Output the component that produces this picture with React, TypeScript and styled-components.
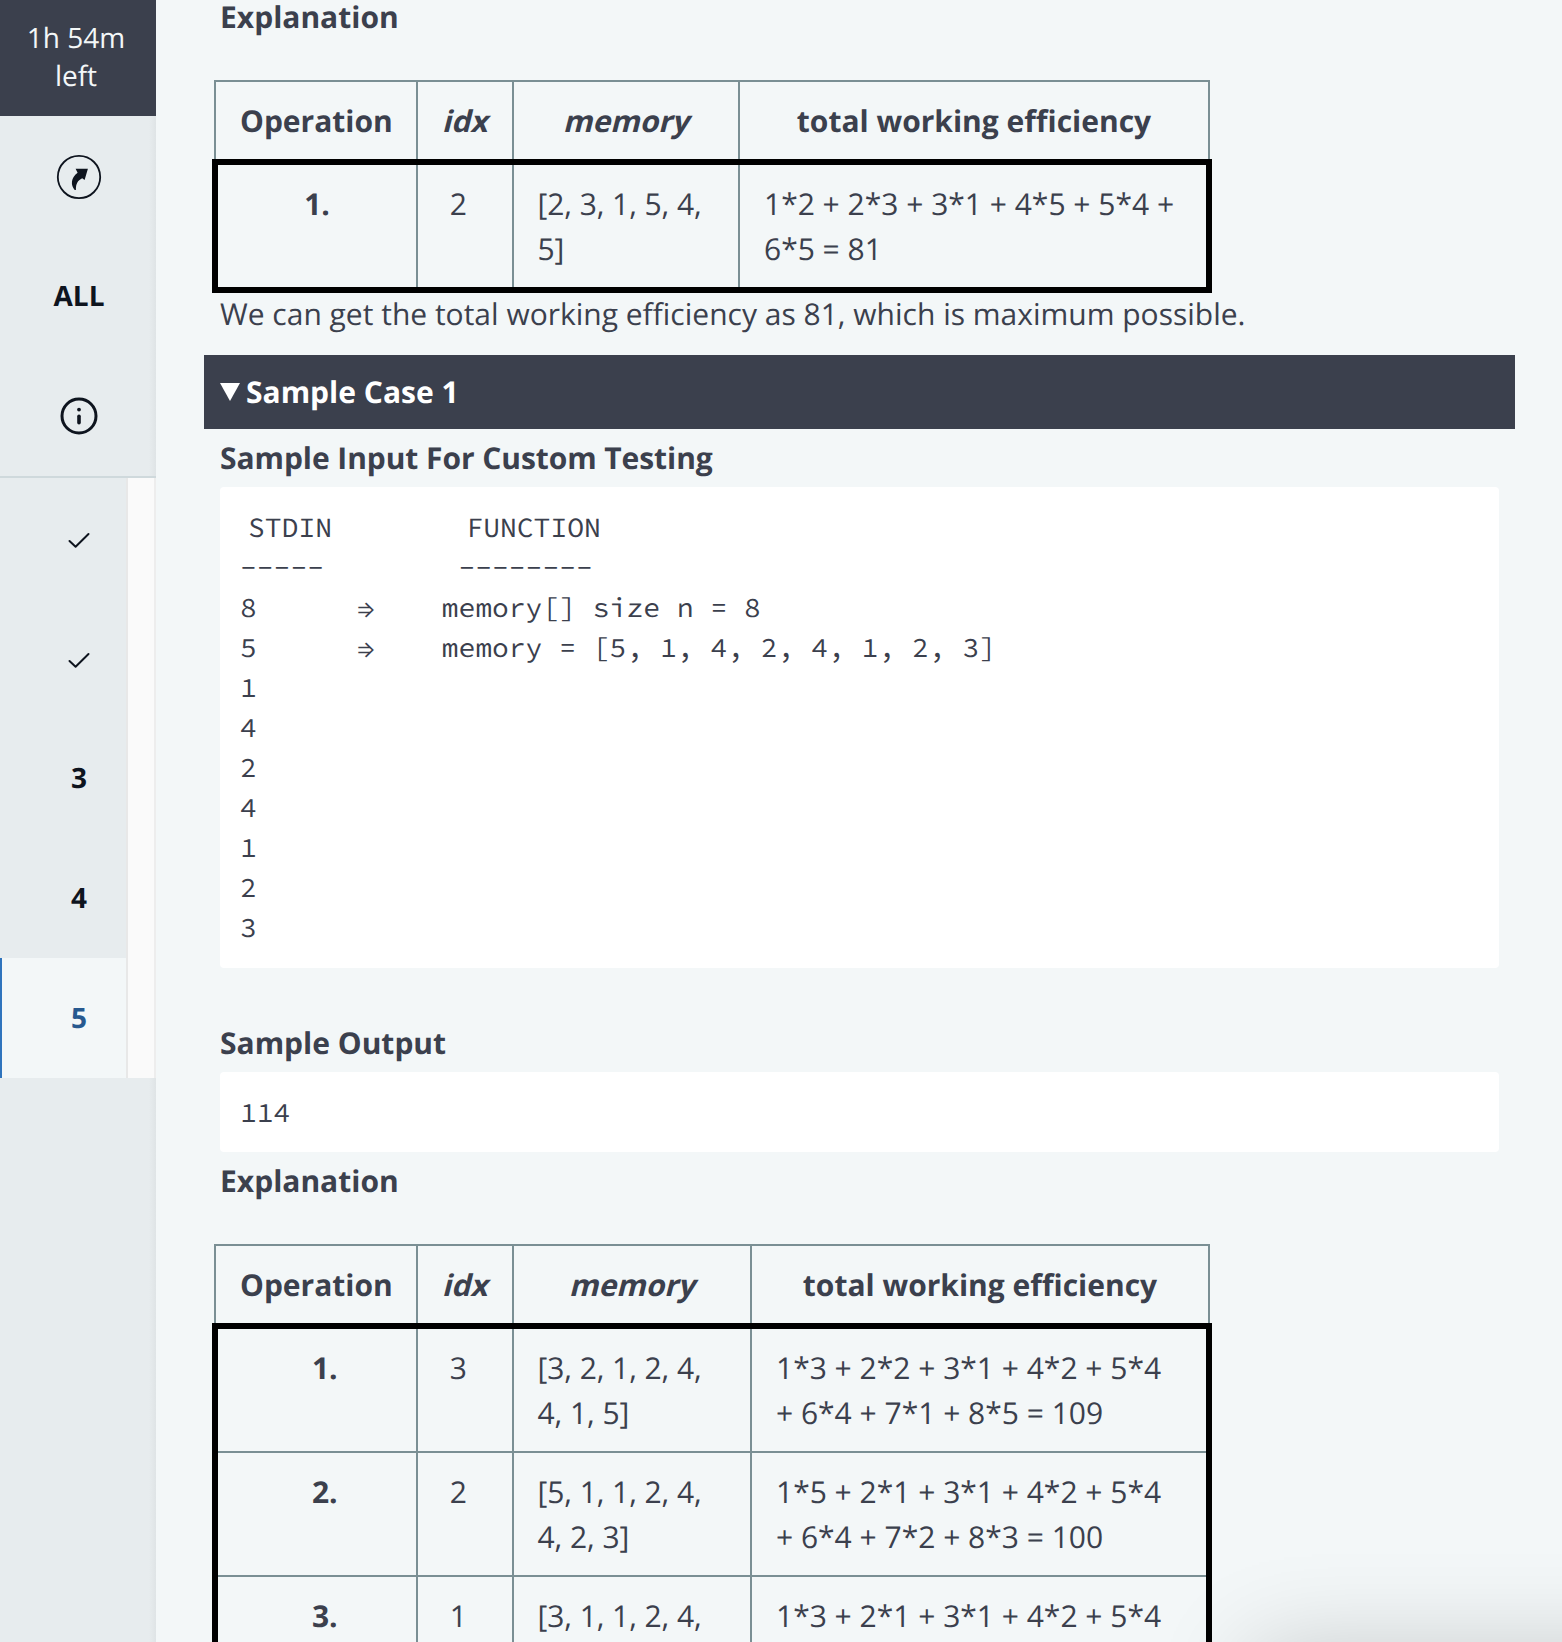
import React from "react";
import styled, { createGlobalStyle } from "styled-components";

const GlobalStyle = createGlobalStyle`
  *, *::before, *::after { box-sizing: border-box; }
  html, body { margin: 0; padding: 0; height: 1642px; overflow: hidden; }
  body { background: #f3f7f8; font-family: "Open Sans", sans-serif; text-rendering: geometricPrecision; }
`;

const Page = styled.div`
  position: relative;
  display: flex;
  width: 1562px;
  height: 1642px;
  overflow: hidden;
  background: #f3f7f8;
  color: #3b404d;
  font-size: 30px;
  line-height: 45px;
`;

const Sidebar = styled.aside`
  display: flex;
  flex-direction: column;
  flex: none;
  width: 156px;
  color: #0e141e;
  font-size: 28px;
  line-height: 38px;
  background: linear-gradient(to left, #dfe4e6 0, #e7ecee 7px, #e7ecee 100%);
`;

const Timer = styled.div`
  height: 116px;
  padding: 19px 4px 0 0;
  background: #3b404d;
  color: #f3f7f8;
  text-align: center;
`;

const TopItems = styled.div`
  display: flex;
  flex-direction: column;
  height: 362px;
  border-bottom: 2px solid #cfd9dc;
`;

const NavItem = styled.div<{ $active?: boolean }>`
  display: flex;
  align-items: center;
  justify-content: center;
  flex: none;
  height: 120px;
  padding-left: 2px;
  font-weight: 700;
`;

const QuestionArea = styled.div`
  display: flex;
  height: 600px;
`;

const Questions = styled.div`
  width: 126px;
  background: #e7ecee;
`;

const Question = styled(NavItem)`
  padding-left: ${(p) => (p.$active ? 30 : 32)}px;
  border-left: ${(p) => (p.$active ? "2px solid #2f74bd" : "none")};
  background: ${(p) => (p.$active ? "#f3f7f8" : "transparent")};
  color: ${(p) => (p.$active ? "#27598f" : "inherit")};
`;

const ScrollTrack = styled.div`
  width: 30px;
  background: #fafafa;
  border-left: 2px solid #e8e8e8;
  border-right: 2px solid #ededed;
`;

const Main = styled.main`
  flex: none;
  width: 1406px;
  padding: 0 47px 0 48px;
`;

const Heading = styled.h4<{ $top?: number; $bottom?: number; $tracking?: number }>`
  margin: ${(p) => p.$top ?? 0}px 0 ${(p) => p.$bottom ?? 0}px 16px;
  height: 45px;
  font-size: 30px;
  font-weight: 700;
  letter-spacing: ${(p) => p.$tracking ?? 0}px;
`;

const Paragraph = styled.p`
  margin: -2px 0 19px 16px;
  height: 45px;
`;

const CaseBar = styled.div`
  display: flex;
  align-items: center;
  gap: 6px;
  height: 74px;
  padding: 0 16px 2px;
  background: #3b404d;
  color: #fff;
  font-weight: 700;
`;

const Marker = styled.svg`
  margin-top: 2px;
`;

const Pre = styled.pre<{ $bottom?: number }>`
  margin: 0 16px;
  padding: 20px 20px ${(p) => p.$bottom ?? 20}px;
  background: #fff;
  border-radius: 4px;
  font-family: "Source Code Pro", "Noto Sans Mono CJK SC", "Liberation Mono", monospace;
  font-size: 28px;
  line-height: 40px;
`;

const Line = styled.span<{ $indent?: boolean }>`
  display: block;
  height: 40px;
  padding-left: ${(p) => (p.$indent ? 8 : 0)}px;
`;

const Table = styled.table`
  width: 1000px;
  margin-left: 8px;
  table-layout: fixed;
  border-collapse: collapse;
`;

const Row = styled.tr``;

const Body = styled.tbody`
  border: 6px solid #000;
`;

const Cell = styled.td<{ $center?: boolean; $bold?: boolean }>`
  padding: 16px 0 16px 24px;
  padding-right: ${(p) => (p.$center ? 24 : 0)}px;
  border: 2px solid #7a8f94;
  text-align: ${(p) => (p.$center ? "center" : "left")};
  font-weight: ${(p) => (p.$bold ? 700 : 400)};
  vertical-align: top;
  white-space: pre;
`;

const MemoryCell = styled(Cell)`
  padding-left: 23.5px;
  letter-spacing: -0.09px;
`;

const Slanted = styled.em`
  display: inline-block;
  font-style: normal;
  transform: skewX(-14deg);
  transform-origin: 50% 33px;
`;

const CornerShadow = styled.div`
  position: absolute;
  left: 1252px;
  top: 1650px;
  width: 600px;
  height: 300px;
  box-shadow: 0 0 92px rgba(0, 0, 0, 0.19);
  pointer-events: none;
`;

type Entry = { op: string; idx: string; memory: string; total: string };

function OperationsTable({ memoryWidth, rows }: { memoryWidth: number; rows: Entry[] }) {
  return (
    <Table>
      <colgroup>
        <col width={202} />
        <col width={96} />
        <col width={memoryWidth} />
        <col />
      </colgroup>
      <thead>
        <Row>
          <Cell as="th" $center $bold>Operation</Cell>
          <Cell as="th" $center $bold><Slanted>idx</Slanted></Cell>
          <Cell as="th" $center $bold><Slanted>memory</Slanted></Cell>
          <Cell as="th" $center $bold>total working efficiency</Cell>
        </Row>
      </thead>
      <Body>
        {rows.map((r) => (
          <Row key={r.op}>
            <Cell $center $bold>{r.op}</Cell>
            <Cell>{"\u00a0" + r.idx}</Cell>
            <MemoryCell>{r.memory}</MemoryCell>
            <Cell>{r.total}</Cell>
          </Row>
        ))}
      </Body>
    </Table>
  );
}

const CheckIcon = () => (
  <svg width="24" height="24" viewBox="0 0 24 24" fill="none" stroke="#0e141e" strokeWidth="2" strokeLinecap="round" strokeLinejoin="round">
    <path d="M2.5 15 L8.6 20.7 L21.5 8" />
  </svg>
);

const ShareIcon = () => (
  <svg width="46" height="48" viewBox="0 0 46 48">
    <circle cx="23" cy="25" r="21.2" fill="none" stroke="#0e141e" strokeWidth="1.8" />
    <path fill="#0e141e" d="M19.6 16.8 H31.9 L28.6 27.9 L26.2 26.3 C21.5 28.5 19.8 32 19.9 37.9 H18.7 C14.6 33.5 14.6 26 21.6 20.8 Z" />
  </svg>
);

const InfoIcon = () => (
  <svg width="38" height="38" viewBox="0 0 38 38" fill="none" stroke="#0e141e" strokeLinecap="round">
    <circle cx="19" cy="19" r="17" strokeWidth="3" />
    <path d="M19 19.3 V25.7" strokeWidth="3.6" />
    <circle cx="19" cy="12.6" r="1.9" fill="#0e141e" stroke="none" />
  </svg>
);

export default function App() {
  return (
    <Page>
      <GlobalStyle />
      <Sidebar>
        <Timer>1h 54m<br />left</Timer>
        <TopItems>
          <NavItem><ShareIcon /></NavItem>
          <NavItem>ALL</NavItem>
          <NavItem><InfoIcon /></NavItem>
        </TopItems>
        <QuestionArea>
          <Questions>
            <Question><CheckIcon /></Question>
            <Question><CheckIcon /></Question>
            <Question>3</Question>
            <Question>4</Question>
            <Question $active>5</Question>
          </Questions>
          <ScrollTrack />
        </QuestionArea>
      </Sidebar>
      <Main>
        <Heading $top={-6} $bottom={41}>Explanation</Heading>
        <OperationsTable
          memoryWidth={226}
          rows={[{ op: "1.", idx: "2", memory: "[2, 3, 1, 5, 4,\n5]", total: "1*2 + 2*3 + 3*1 + 4*5 + 5*4 +\n6*5 = 81" }]}
        />
        <Paragraph>We can get the total working efficiency as 81, which is maximum possible.</Paragraph>
        <CaseBar>
          <Marker width="20" height="18" viewBox="0 0 20 18"><path d="M0 0 H20 L10 18 Z" fill="#fff" /></Marker>
          Sample Case 1
        </CaseBar>
        <Heading $top={6} $bottom={7} $tracking={-0.07}>Sample Input For Custom Testing</Heading>
        <Pre $bottom={21}>
          <Line $indent>{"STDIN        FUNCTION"}</Line>
          <Line>{"-----        --------"}</Line>
          <Line>{"8      ⇒    memory[] size n = 8"}</Line>
          <Line>{"5      ⇒    memory = [5, 1, 4, 2, 4, 1, 2, 3]"}</Line>
          {["1", "4", "2", "4", "1", "2", "3"].map((n, i) => <Line key={i}>{n}</Line>)}
        </Pre>
        <Heading $top={52} $bottom={7}>Sample Output</Heading>
        <Pre><Line>114</Line></Pre>
        <Heading $top={6} $bottom={41}>Explanation</Heading>
        <OperationsTable
          memoryWidth={238}
          rows={[
            { op: "\u00a0\u00a01.", idx: "3", memory: "[3, 2, 1, 2, 4,\n4, 1, 5]", total: "1*3 + 2*2 + 3*1 + 4*2 + 5*4\n+ 6*4 + 7*1 + 8*5 = 109" },
            { op: "\u00a0\u00a02.", idx: "2", memory: "[5, 1, 1, 2, 4,\n4, 2, 3]", total: "1*5 + 2*1 + 3*1 + 4*2 + 5*4\n+ 6*4 + 7*2 + 8*3 = 100" },
            { op: "\u00a0\u00a03.", idx: "1", memory: "[3, 1, 1, 2, 4,", total: "1*3 + 2*1 + 3*1 + 4*2 + 5*4" },
          ]}
        />
      </Main>
      <CornerShadow />
    </Page>
  );
}
